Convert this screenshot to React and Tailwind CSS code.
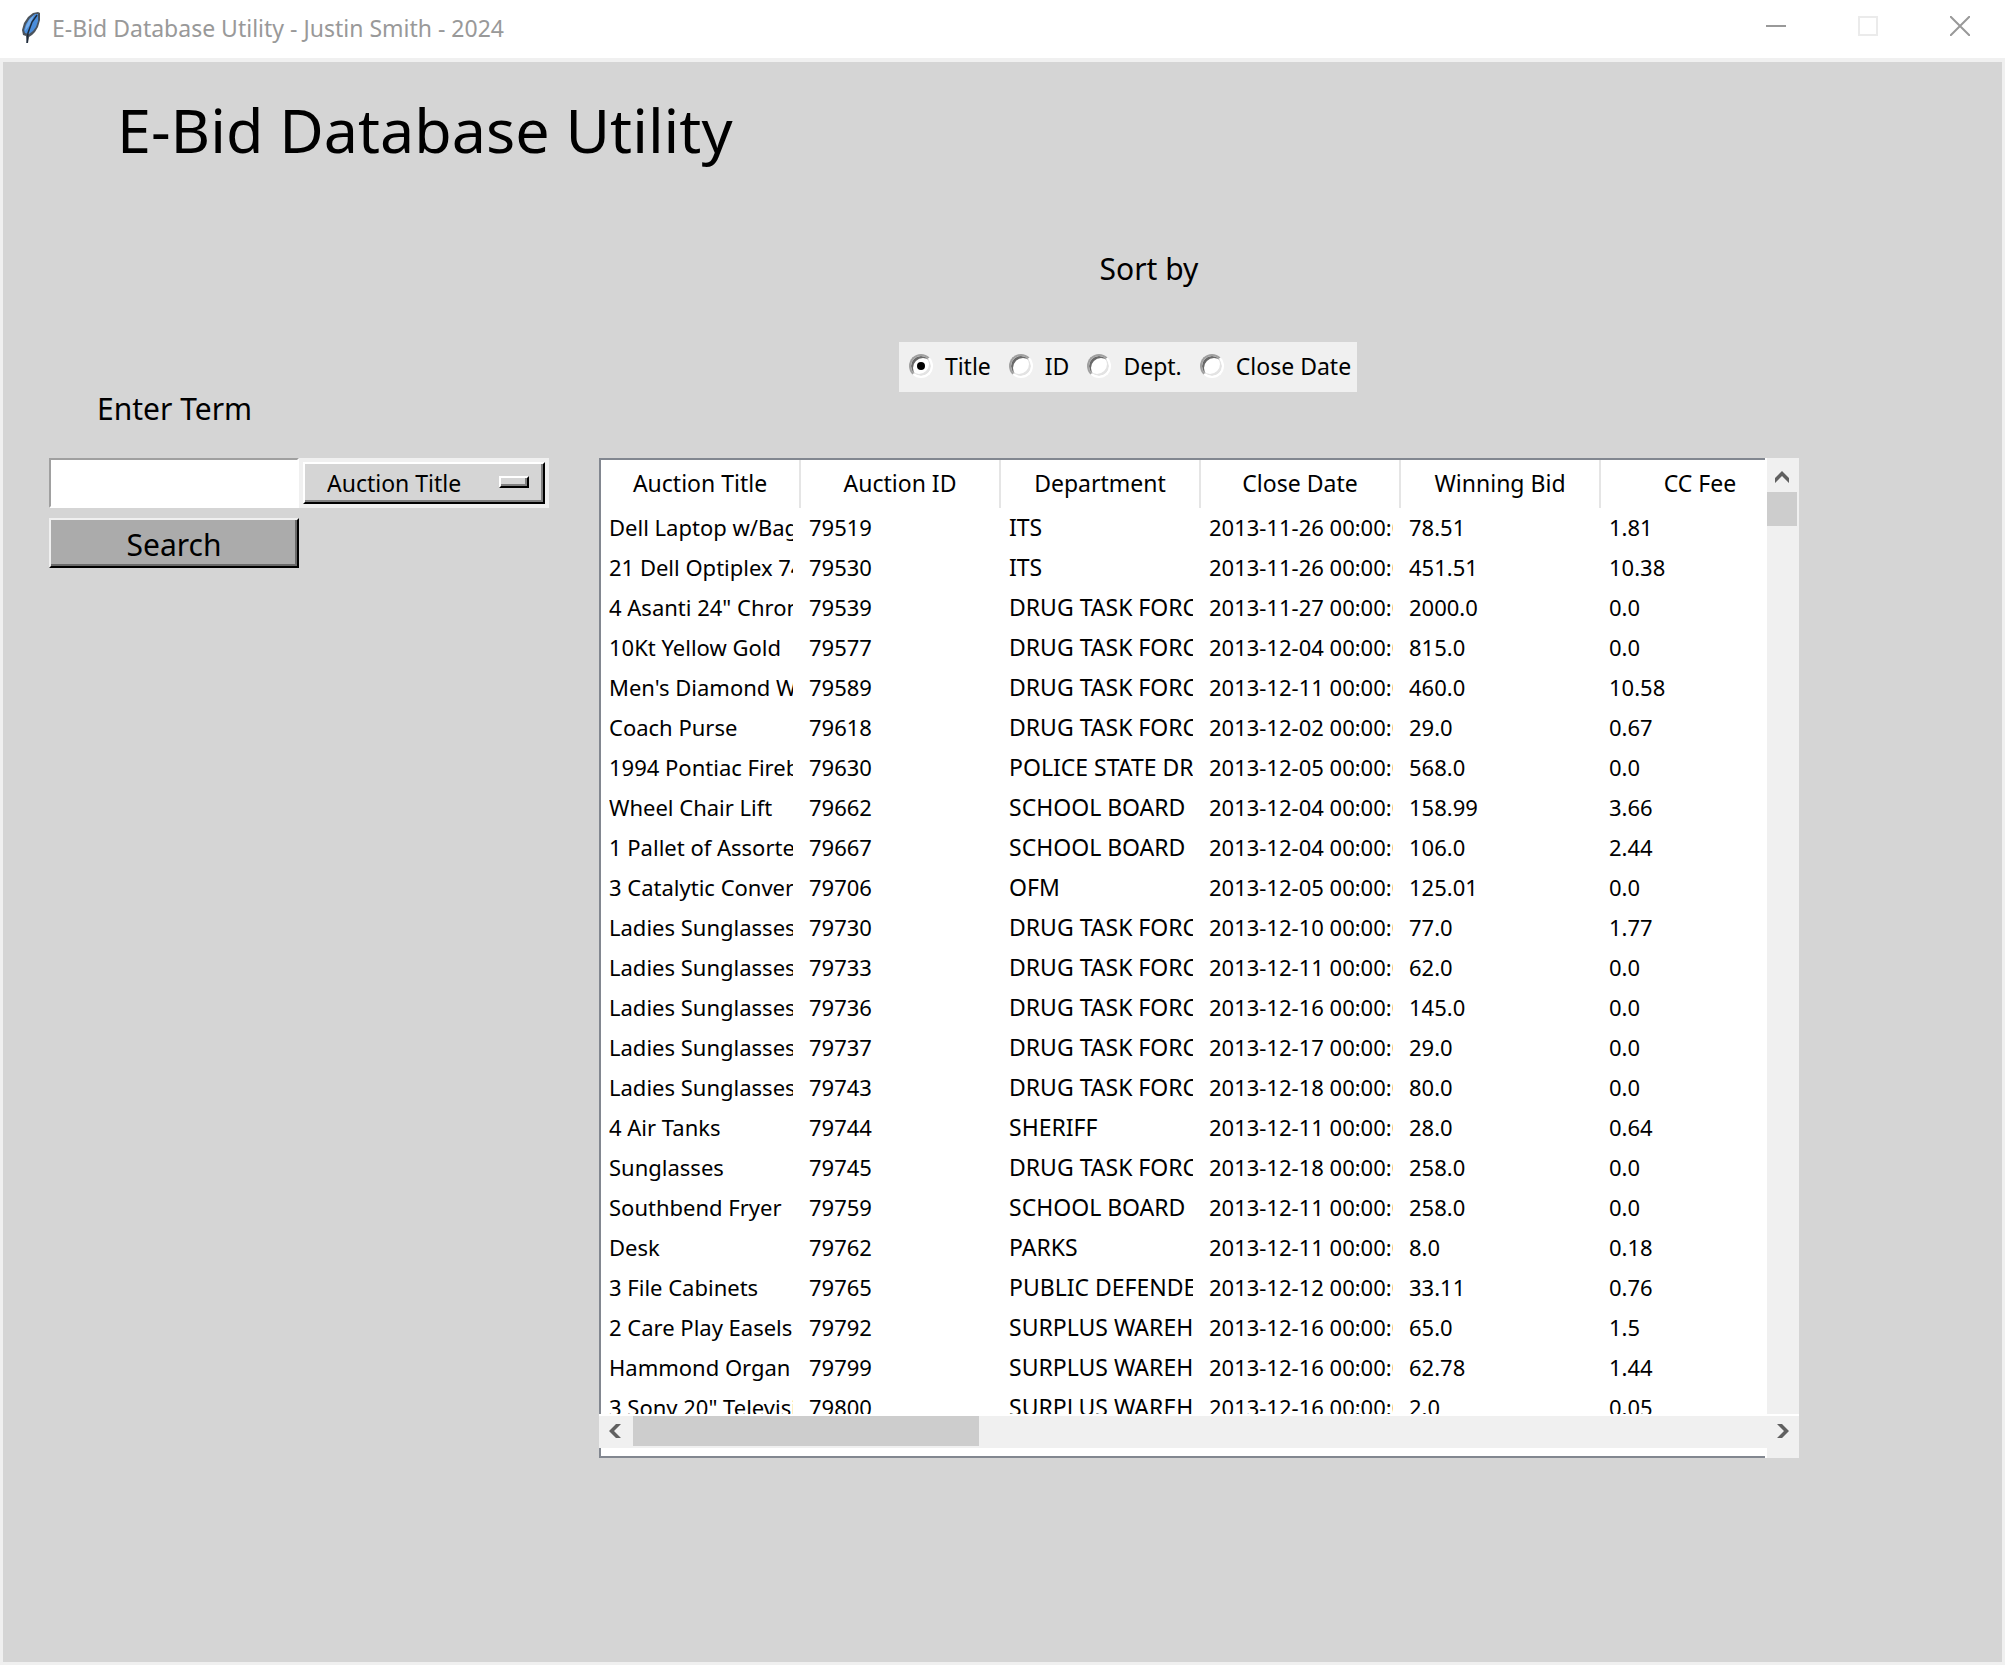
import React, { useState } from "react";

const columns = ["Auction Title", "Auction ID", "Department", "Close Date", "Winning Bid", "CC Fee"];

const rows = [
  ["Dell Laptop w/Bag", "79519", "ITS", "2013-11-26", "78.51", "1.81"],
  ["21 Dell Optiplex 745", "79530", "ITS", "2013-11-26", "451.51", "10.38"],
  ["4 Asanti 24\" Chrome", "79539", "DRUG TASK FORCE", "2013-11-27", "2000.0", "0.0"],
  ["10Kt Yellow Gold", "79577", "DRUG TASK FORCE", "2013-12-04", "815.0", "0.0"],
  ["Men's Diamond Watch", "79589", "DRUG TASK FORCE", "2013-12-11", "460.0", "10.58"],
  ["Coach Purse", "79618", "DRUG TASK FORCE", "2013-12-02", "29.0", "0.67"],
  ["1994 Pontiac Firebird", "79630", "POLICE STATE DRUG", "2013-12-05", "568.0", "0.0"],
  ["Wheel Chair Lift", "79662", "SCHOOL BOARD", "2013-12-04", "158.99", "3.66"],
  ["1 Pallet of Assorted", "79667", "SCHOOL BOARD", "2013-12-04", "106.0", "2.44"],
  ["3 Catalytic Converters", "79706", "OFM", "2013-12-05", "125.01", "0.0"],
  ["Ladies Sunglasses", "79730", "DRUG TASK FORCE", "2013-12-10", "77.0", "1.77"],
  ["Ladies Sunglasses", "79733", "DRUG TASK FORCE", "2013-12-11", "62.0", "0.0"],
  ["Ladies Sunglasses", "79736", "DRUG TASK FORCE", "2013-12-16", "145.0", "0.0"],
  ["Ladies Sunglasses", "79737", "DRUG TASK FORCE", "2013-12-17", "29.0", "0.0"],
  ["Ladies Sunglasses", "79743", "DRUG TASK FORCE", "2013-12-18", "80.0", "0.0"],
  ["4 Air Tanks", "79744", "SHERIFF", "2013-12-11", "28.0", "0.64"],
  ["Sunglasses", "79745", "DRUG TASK FORCE", "2013-12-18", "258.0", "0.0"],
  ["Southbend Fryer", "79759", "SCHOOL BOARD", "2013-12-11", "258.0", "0.0"],
  ["Desk", "79762", "PARKS", "2013-12-11", "8.0", "0.18"],
  ["3 File Cabinets", "79765", "PUBLIC DEFENDER", "2013-12-12", "33.11", "0.76"],
  ["2 Care Play Easels", "79792", "SURPLUS WAREHOUSE", "2013-12-16", "65.0", "1.5"],
  ["Hammond Organ", "79799", "SURPLUS WAREHOUSE", "2013-12-16", "62.78", "1.44"],
  ["3 Sony 20\" Televisions", "79800", "SURPLUS WAREHOUSE", "2013-12-16", "2.0", "0.05"],
];

const sortOptions = ["Title", "ID", "Dept.", "Close Date"];

function Feather() {
  return (
    <svg width="20" height="32" viewBox="0 0 20 32" aria-hidden="true">
      <path d="M17 0 L19 1 L19 8 L17 15 L14 20 L11 23 L8 25 L7 31 L6 31 L5 24 L2 23 L1 18 L3 11 L7 5 L12 1 Z" fill="#4b535c" />
      <path d="M14 2 L17 2 L17 9 L15 15 L12 19 L8 22 L4 21 L3 18 L5 12 L9 6 Z" fill="#4a8ddb" />
      <path d="M13 3 L8 8 L5 14 L4 19 L8 14 L11 8 Z" fill="#78aeea" />
      <path d="M16 3 L11 10 L7 21 L6 31" fill="none" stroke="#1d2a3a" strokeWidth="1.5" />
    </svg>
  );
}

function TitleBar() {
  return (
    <header className="flex h-[58px] items-center justify-between bg-white pl-[21px]">
      <div className="flex items-center gap-[11px] pb-[2px]">
        <Feather />
        <span className="text-[23px] leading-8 text-[#999999]">E-Bid Database Utility - Justin Smith - 2024</span>
      </div>
      <div className="-mr-px flex h-full items-start">
        <button aria-label="Minimize" className="flex h-[52px] w-[92px] items-center justify-center">
          <svg width="20" height="20" viewBox="0 0 20 20"><path d="M0 10H20" stroke="#999999" strokeWidth="2" /></svg>
        </button>
        <button aria-label="Maximize" disabled className="flex h-[52px] w-[92px] items-center justify-center">
          <svg width="20" height="20" viewBox="0 0 20 20"><path d="M1 1H19V19H1Z" fill="none" stroke="#ebebeb" strokeWidth="2" /></svg>
        </button>
        <button aria-label="Close" className="flex h-[52px] w-[92px] items-center justify-center">
          <svg width="20" height="20" viewBox="0 0 20 20"><path d="M0 0L20 20M20 0L0 20" stroke="#999999" strokeWidth="2" /></svg>
        </button>
      </div>
    </header>
  );
}

function SearchForm() {
  return (
    <form className="w-[500px] shrink-0" onSubmit={(e) => e.preventDefault()}>
      <label htmlFor="term" className="block h-[67px] pl-12 text-[30px] leading-9">Enter Term</label>
      <div className="flex">
        <input
          id="term"
          type="text"
          className="h-[50px] w-[250px] border-2 border-t-[#a0a0a0] border-r-white border-b-white border-l-[#a0a0a0] bg-white px-1 text-[23px] outline-none"
        />
        <div className="relative w-[250px] bg-[#f0f0f0] p-1">
          <select
            aria-label="Search field"
            className="block h-[42px] w-full appearance-none border-2 border-t-white border-r-black border-b-black border-l-white bg-[#d5d5d5] pl-[22px] text-[23px] leading-8 shadow-[inset_-2px_-2px_0_#808080] outline-none"
          >
            {columns.map((c) => <option key={c}>{c}</option>)}
          </select>
          <span className="pointer-events-none absolute top-[18px] right-5 h-3 w-[30px] border-2 border-t-white border-r-black border-b-black border-l-white shadow-[inset_-2px_-2px_0_#808080]" />
        </div>
      </div>
      <button
        type="submit"
        className="mt-[10px] h-[50px] w-[250px] border-2 border-t-[#f0f0f0] border-r-black border-b-black border-l-[#f0f0f0] bg-[#ababab] pt-1 text-[30px] leading-9 shadow-[inset_-2px_-2px_0_#696969]"
      >
        Search
      </button>
    </form>
  );
}

function SortBar() {
  const [sort, setSort] = useState("Title");
  return (
    <div role="radiogroup" aria-labelledby="sort-label" className="flex flex-col items-center">
      <span id="sort-label" className="ml-[42px] text-[30px] leading-9">Sort by</span>
      <div className="mt-[55px] flex h-[50px] items-center gap-[18px] bg-[#f0f0f0] pr-[6px] pb-[2px] pl-[10px]">
        {sortOptions.map((o) => (
          <label key={o} className="flex items-center gap-3 text-[23px] leading-8">
            <input
              type="radio"
              name="sort"
              checked={sort === o}
              onChange={() => setSort(o)}
              className="flex size-6 appearance-none items-center justify-center rounded-full border-2 border-t-[#a0a0a0] border-r-white border-b-white border-l-[#a0a0a0] bg-white shadow-[inset_2px_2px_0_#696969,inset_-2px_-2px_0_#e3e3e3] checked:before:size-2 checked:before:rounded-full checked:before:bg-black checked:before:content-['']"
            />
            {o}
          </label>
        ))}
      </div>
    </div>
  );
}

function Chevron({ d, label, className, w, h }) {
  return (
    <button aria-label={label} className={className}>
      <svg width={w} height={h} viewBox={`0 0 ${w} ${h}`}>
        <path d={d} fill="#606060" />
      </svg>
    </button>
  );
}

function Results() {
  return (
    <div className="bg-white">
      <div className="flex">
        <div className="mr-[2px] min-w-0 flex-1 overflow-hidden border-t-2 border-l-2 border-[#828790]">
          <div className="h-[954px] overflow-hidden">
            <table className="w-[1200px] table-fixed border-separate border-spacing-0 leading-8">
              <thead>
                <tr className="h-12">
                  {columns.map((c) => (
                    <th key={c} className="border-r-2 border-[#e5e5e5] px-0 pt-0 pb-[2px] text-center text-[23px] font-normal whitespace-nowrap">{c}</th>
                  ))}
                </tr>
              </thead>
              <tbody>
                {rows.map((r) => (
                  <tr key={r[1]} className="h-10">
                    {r.map((v, i) => (
                      <td key={i} className={i === 2 ? "px-2 pt-0 pb-[2px] text-[23px]" : "px-2 pt-0 pb-[2px] text-[22px]"}>
                        <div className="overflow-hidden whitespace-nowrap">{i === 3 ? `${v} 00:00:00` : v}</div>
                      </td>
                    ))}
                  </tr>
                ))}
              </tbody>
            </table>
          </div>
        </div>
        <div className="w-8 bg-[#f0f0f0]">
          <Chevron label="Scroll up" w={14} h={12} d="M7 0L14 7V12L7 5L0 12V7Z" className="flex h-[34px] w-[30px] items-center justify-center pt-1" />
          <div className="h-[34px] w-[30px] bg-[#cdcdcd]" />
        </div>
      </div>
      <div className="mt-[2px] flex">
        <div className="min-w-0 flex-1">
          <div className="flex h-8 bg-[#f0f0f0]">
            <Chevron label="Scroll left" w={12} h={14} d="M12 0H7L0 7L7 14H12L5 7Z" className="flex h-[30px] w-[34px] items-center justify-center pr-[2px]" />
            <div className="h-[30px] w-[346px] bg-[#cdcdcd]" />
          </div>
          <div className="mr-[2px] h-[10px] border-b-2 border-l-2 border-[#828790]" />
        </div>
        <div className="w-8 bg-[#f0f0f0]">
          <Chevron label="Scroll right" w={12} h={14} d="M0 0H5L12 7L5 14H0L7 7Z" className="flex h-[30px] w-full items-center justify-center" />
        </div>
      </div>
    </div>
  );
}

export default function App() {
  return (
    <div className="flex min-h-screen flex-col bg-[#f0f0f0] font-['Noto_Sans',sans-serif] text-black">
      <TitleBar />
      <main className="mx-[3px] mt-1 mb-[3px] flex-1 bg-[#d5d5d5]">
        <h1 className="pt-6 pl-[114px] text-[61px] leading-[88px]">E-Bid Database Utility</h1>
        <div className="flex items-start gap-[50px] pt-[77px] pr-[203px] pl-[46px]">
          <div className="pt-[140px]"><SearchForm /></div>
          <div className="min-w-0 flex-1">
            <div className="mr-[142px]"><SortBar /></div>
            <div className="mt-[66px]"><Results /></div>
          </div>
        </div>
      </main>
    </div>
  );
}
